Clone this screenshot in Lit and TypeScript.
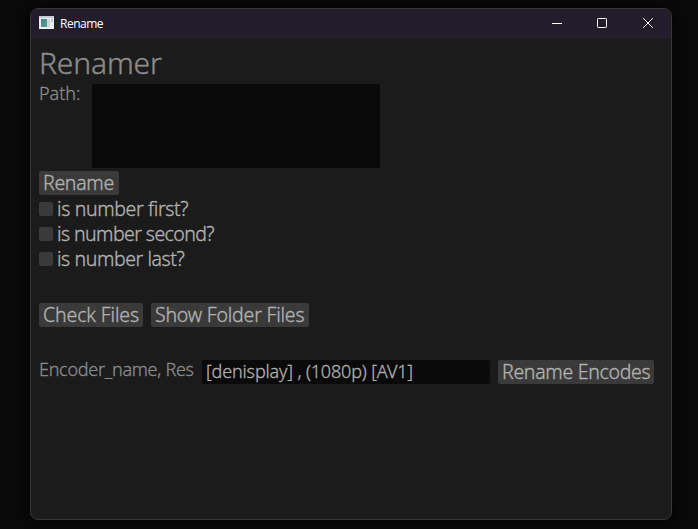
import { LitElement, html, css } from "lit";
import { customElement, property, state } from "lit/decorators.js";

@customElement("app-button")
class AppButton extends LitElement {
  static styles = css`
    :host { display: block; height: 24px; }
    button {
      all: unset; box-sizing: border-box; display: block; width: 100%; height: 24px;
      padding-left: 4px; border-radius: 2px; background: #3a3a3a; color: #b0b0b0;
      line-height: 24px; white-space: nowrap; -webkit-text-stroke: 0.35px #b0b0b0;
    }
  `;
  render() {
    return html`<button><slot></slot></button>`;
  }
}

@customElement("app-check")
class AppCheck extends LitElement {
  @property() label = "";
  @property({ type: Boolean }) checked = false;
  static styles = css`
    :host { display: flex; align-items: center; gap: 4px; height: 25px; color: #b0b0b0; white-space: nowrap; }
    .box { width: 14px; height: 14px; border-radius: 2px; background: #3a3a3a; }
    .tick { display: block; fill: none; stroke: #b0b0b0; stroke-width: 1.5; }
    .text { line-height: 25px; -webkit-text-stroke: 0.35px #b0b0b0; }
  `;
  render() {
    return html`
      <span class="box" @click=${() => (this.checked = !this.checked)}>
        ${this.checked ? html`<svg class="tick" viewBox="0 0 14 14"><path d="M3 7l3 3 5-6" /></svg>` : ""}
      </span>
      <span class="text">${this.label}</span>
    `;
  }
}

@customElement("app-root")
class AppRoot extends LitElement {
  @state() private encoder = "[denisplay] , (1080p) [AV1]";

  static styles = css`
    :host {
      display: block; box-sizing: border-box; width: 100vw; height: 529px; padding: 8px 26px 9px 30px;
      background: #0a0a0a; overflow: hidden;
      font-family: "Noto Sans", "Open Sans", sans-serif; font-weight: 300;
    }
    .window {
      box-sizing: border-box; height: 512px; border: 1px solid #363636; border-radius: 8px;
      background: #1b1b1b; overflow: hidden; box-shadow: 0 2px 14px 4px #050505;
    }
    .titlebar { display: flex; align-items: center; height: 30px; background: #231c2b; color: #fff; }
    .app-icon { width: 15px; height: 13px; margin-left: 8px; margin-top: -3px; }
    .title { flex: 1; margin-left: 6px; font: 400 12px/30px "Open Sans", sans-serif; letter-spacing: -0.5px; }
    .control { width: 46px; height: 30px; display: grid; place-items: center; }
    .control svg { width: 12px; height: 12px; margin-top: -2px; fill: none; stroke: #fff; }
    .control .minus { margin-left: 1px; }
    .content { padding: 8px 0 0 8px; font-size: 19.5px; letter-spacing: -0.3px; }
    h1 {
      margin: 0; height: 37px; font-size: 30px; line-height: 32px; font-weight: 300;
      color: #8a8a8a; letter-spacing: -0.15px; white-space: nowrap; -webkit-text-stroke: 0.4px #8a8a8a;
    }
    .row { display: flex; align-items: flex-start; gap: 8px; }
    .label {
      color: #8a8a8a; font-size: 18px; line-height: 19px; white-space: nowrap; letter-spacing: 0;
      -webkit-text-stroke: 0.3px #8a8a8a;
    }
    .path { width: 45px; }
    .names { width: 155px; letter-spacing: -0.28px; }
    .area { width: 288px; height: 84px; border-radius: 2px; background: #0a0a0a; }
    .field {
      all: unset; box-sizing: border-box; width: 288px; height: 24px; padding: 0 4px 2px; border-radius: 2px;
      background: #0a0a0a; color: #b0b0b0; font-size: 18px; line-height: 22px; letter-spacing: -0.16px;
      -webkit-text-stroke: 0.3px #b0b0b0;
    }
    .rename { width: 80px; margin: 3px 0 1px; }
    .first { letter-spacing: -0.36px; }
    .second { letter-spacing: -0.58px; }
    .last { letter-spacing: -0.42px; }
    .actions { margin-top: 32px; }
    .check-files { width: 104px; letter-spacing: -0.13px; }
    .show-files { width: 158px; letter-spacing: -0.2px; }
    .encode { margin-top: 33px; }
    .encodes { width: 156px; }
  `;

  render() {
    return html`
      <div class="window">
        <div class="titlebar">
          <svg class="app-icon" viewBox="0 0 15 13">
            <defs>
              <linearGradient id="pane" x2="1" y2="1">
                <stop stop-color="#3f8294" /><stop offset="1" stop-color="#63a08a" />
              </linearGradient>
            </defs>
            <rect width="15" height="13" fill="#e9eef2" />
            <rect width="15" height="2" fill="#c5cbd6" />
            <rect x="2" y="3" width="6" height="8" fill="url(#pane)" />
            <rect x="8" y="3" width="3" height="8" fill="#d3d7da" />
            <rect x="12" y="3" width="2" height="3" fill="#c3c7ca" />
          </svg>
          <div class="title">Rename</div>
          <div class="control"><svg class="minus" viewBox="0 0 12 12"><path d="M1 6.5h10" /></svg></div>
          <div class="control"><svg viewBox="0 0 12 12"><rect x="1.5" y="1.5" width="9" height="9" rx="0.8" /></svg></div>
          <div class="control"><svg viewBox="0 0 12 12"><path d="M1.2 1.2l9.6 9.6M10.8 1.2l-9.6 9.6" /></svg></div>
        </div>
        <div class="content">
          <h1>Renamer</h1>
          <div class="row">
            <div class="label path">Path:</div>
            <div class="area"></div>
          </div>
          <app-button class="rename">Rename</app-button>
          <app-check class="first" label="is number first?"></app-check>
          <app-check class="second" label="is number second?"></app-check>
          <app-check class="last" label="is number last?"></app-check>
          <div class="row actions">
            <app-button class="check-files">Check Files</app-button>
            <app-button class="show-files">Show Folder Files</app-button>
          </div>
          <div class="row encode">
            <div class="label names">Encoder_name, Res</div>
            <input class="field" .value=${this.encoder} />
            <app-button class="encodes">Rename Encodes</app-button>
          </div>
        </div>
      </div>
    `;
  }
}
